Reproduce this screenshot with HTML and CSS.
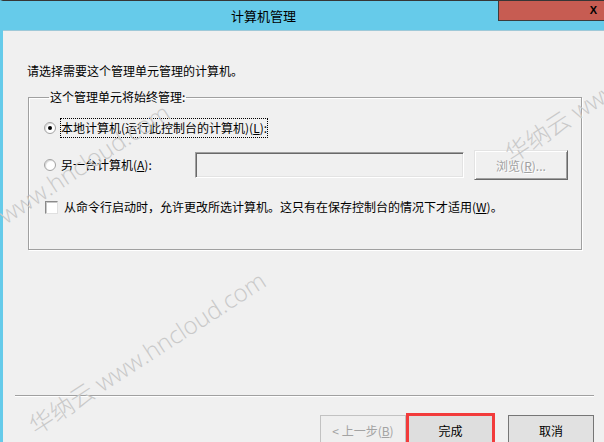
FILE: index.html
```html
<!DOCTYPE html>
<html lang="zh-CN">
<head>
<meta charset="utf-8">
<title>计算机管理</title>
<link rel="stylesheet" href="styles.css">
</head>
<body>
<div class="window">
  <div class="titlebar">
    <span class="title">计算机管理</span>
    <span class="close"><b class="close-x">X</b></span>
  </div>
  <div class="main">
    <p class="intro">请选择需要这个管理单元管理的计算机。</p>
    <fieldset class="group">
      <legend>这个管理单元将始终管理:</legend>
      <div class="row row-local">
        <span class="radio checked"></span>
        <span class="label focus">本地计算机(运行此控制台的计算机)(<u>L</u>):</span>
      </div>
      <div class="row row-other">
        <span class="radio"></span>
        <span class="label fixed">另一台计算机(<u>A</u>):</span>
        <span class="textbox"></span>
        <span class="btn-browse">浏览(<u>R</u>)...</span>
      </div>
      <div class="row row-check">
        <span class="checkbox"></span>
        <span class="label check-label">从命令行启动时，允许更改所选计算机。这只有在保存控制台的情况下才适用(<u>W</u>)。</span>
      </div>
    </fieldset>
  </div>
  <div class="footer">
    <div class="separator"></div>
    <div class="buttons">
      <span class="btn btn-prev">&lt; 上一步(<u>B</u>)</span>
      <span class="btn btn-finish">完成</span>
      <span class="btn btn-cancel">取消</span>
    </div>
  </div>
</div>
<div class="wm-layer">
  <div class="wm wm1">华纳云 www.hncloud.com</div>
  <div class="wm wm2">华纳云 www.hncloud.com</div>
  <div class="wm wm3">华纳云 www.hncloud.com</div>
</div>
</body>
</html>
```

FILE: styles.css
```css
html, body {
  margin: 0;
  padding: 0;
}
body {
  position: relative;
  width: 604px;
  height: 442px;
  background: #f0f0f0;
  font-family: "Noto Sans CJK SC", "Noto Sans", sans-serif;
  font-size: 12px;
  color: #000;
}
.window {
  height: 441px;
  overflow: hidden;
  border-top: 1px solid #363636;
  border-left: 3px solid #66cbea;
  background: #f0f0f0;
}
.titlebar {
  display: flex;
  align-items: flex-start;
  height: 29px;
  background: #66cbea;
  border-bottom: 1px solid #9fc9d8;
}
.title {
  margin-left: 228px;
  line-height: 29px;
  font-size: 13px;
  color: #000;
}
.close {
  margin-left: auto;
  width: 106px;
  height: 20px;
  box-sizing: border-box;
  background: #c75c52;
  border-left: 1px solid #3c3c3c;
  border-bottom: 1px solid #3c3c3c;
  display: flex;
  align-items: center;
  justify-content: flex-end;
  padding: 0 7px 1px 0;
}
.close-x {
  font-family: "Liberation Sans", sans-serif;
  font-weight: bold;
  font-size: 11px;
  line-height: 11px;
  color: #000;
}
.main {
  padding-left: 24px;
}
.intro {
  margin: 33px 0 0 0;
  line-height: 14px;
}
.group {
  margin: 12px 0 0 1px;
  padding: 0 0 35px 15px;
  width: 554px;
  min-width: 0;
  box-sizing: border-box;
  border: 1px solid #a0a0a0;
  box-shadow: inset 1px 1px 0 #fff, 1px 1px 0 #fff;
}
.group legend {
  padding: 0 1px;
  margin-left: 5px;
  line-height: 14px;
}
.row {
  display: flex;
  align-items: center;
}
.row-local {
  margin-top: 14px;
  height: 20px;
}
.row-other {
  margin-top: 12px;
  height: 30px;
}
.row-check {
  margin-top: 20px;
  height: 14px;
}
.radio {
  width: 12px;
  height: 12px;
  box-sizing: border-box;
  border-radius: 50%;
  border: 1px solid #a2a2a2;
  background: #fff;
  box-shadow: inset 1px 1px 1px #d8d8d8;
  display: flex;
  align-items: center;
  justify-content: center;
}
.radio.checked::after {
  content: "";
  width: 4px;
  height: 4px;
  border-radius: 50%;
  background: #000;
}
.label {
  margin-left: 4px;
  line-height: 18px;
  white-space: nowrap;
}
.focus {
  border: 1px dotted #000;
  padding: 0;
}
.fixed {
  width: 135px;
  padding-left: 1px;
  box-sizing: border-box;
}
.textbox {
  width: 269px;
  height: 26px;
  box-sizing: border-box;
  background: #f0f0f0;
  border: 1px solid;
  border-color: #a0a0a0 #fff #fff #a0a0a0;
  box-shadow: inset 1px 1px 0 #696969, inset -1px -1px 0 #e3e3e3;
}
.btn-browse {
  margin-left: 10px;
  width: 94px;
  height: 30px;
  box-sizing: border-box;
  display: flex;
  align-items: center;
  justify-content: center;
  background: #f0f0f0;
  border: 1px solid;
  border-color: #e3e3e3 #696969 #696969 #e3e3e3;
  box-shadow: inset 1px 1px 0 #fff, inset -1px -1px 0 #a0a0a0;
  color: #a0a0a0;
  text-shadow: 1px 1px 0 #fff;
}
.checkbox {
  margin-left: 1px;
  width: 13px;
  height: 13px;
  box-sizing: border-box;
  background: #fff;
  border: 1px solid;
  border-color: #8a8a8a #e0e0e0 #e0e0e0 #8a8a8a;
  box-shadow: inset 1px 1px 0 #c8c8c8;
}
.check-label {
  margin-left: 6px;
}
.separator {
  margin: 145px 10px 0 12px;
  height: 0;
  border-top: 1px solid #a0a0a0;
  border-bottom: 1px solid #fff;
}
.buttons {
  margin-top: 18px;
  display: flex;
  justify-content: flex-end;
  align-items: flex-start;
  padding-right: 10px;
}
.btn {
  height: 30px;
  box-sizing: border-box;
  display: flex;
  align-items: center;
  justify-content: center;
  white-space: nowrap;
}
.btn-prev {
  width: 86px;
  border: 1px solid #c2c2c2;
  background: #efefef;
  color: #a3a3a3;
}
.btn-finish {
  width: 89px;
  height: 34px;
  margin-top: -2px;
  border: 3px solid #f23b3b;
  background: #dedede;
}
.btn-cancel {
  width: 86px;
  margin-left: 13px;
  border: 1px solid #767676;
  background: #e1e1e1;
}
.wm-layer {
  position: absolute;
  inset: 0;
  overflow: hidden;
  pointer-events: none;
}
.wm {
  position: absolute;
  font-family: "Open Sans", "Noto Sans CJK SC", sans-serif;
  font-weight: 300;
  font-size: 24px;
  line-height: 24px;
  color: #c9c9c9;
  white-space: nowrap;
  transform-origin: 0 100%;
  transform: rotate(-33deg);
}
.wm1 {
  left: -58px;
  top: 246px;
}
.wm2 {
  left: 514px;
  top: 142px;
}
.wm3 {
  left: 38px;
  top: 414px;
}
```
